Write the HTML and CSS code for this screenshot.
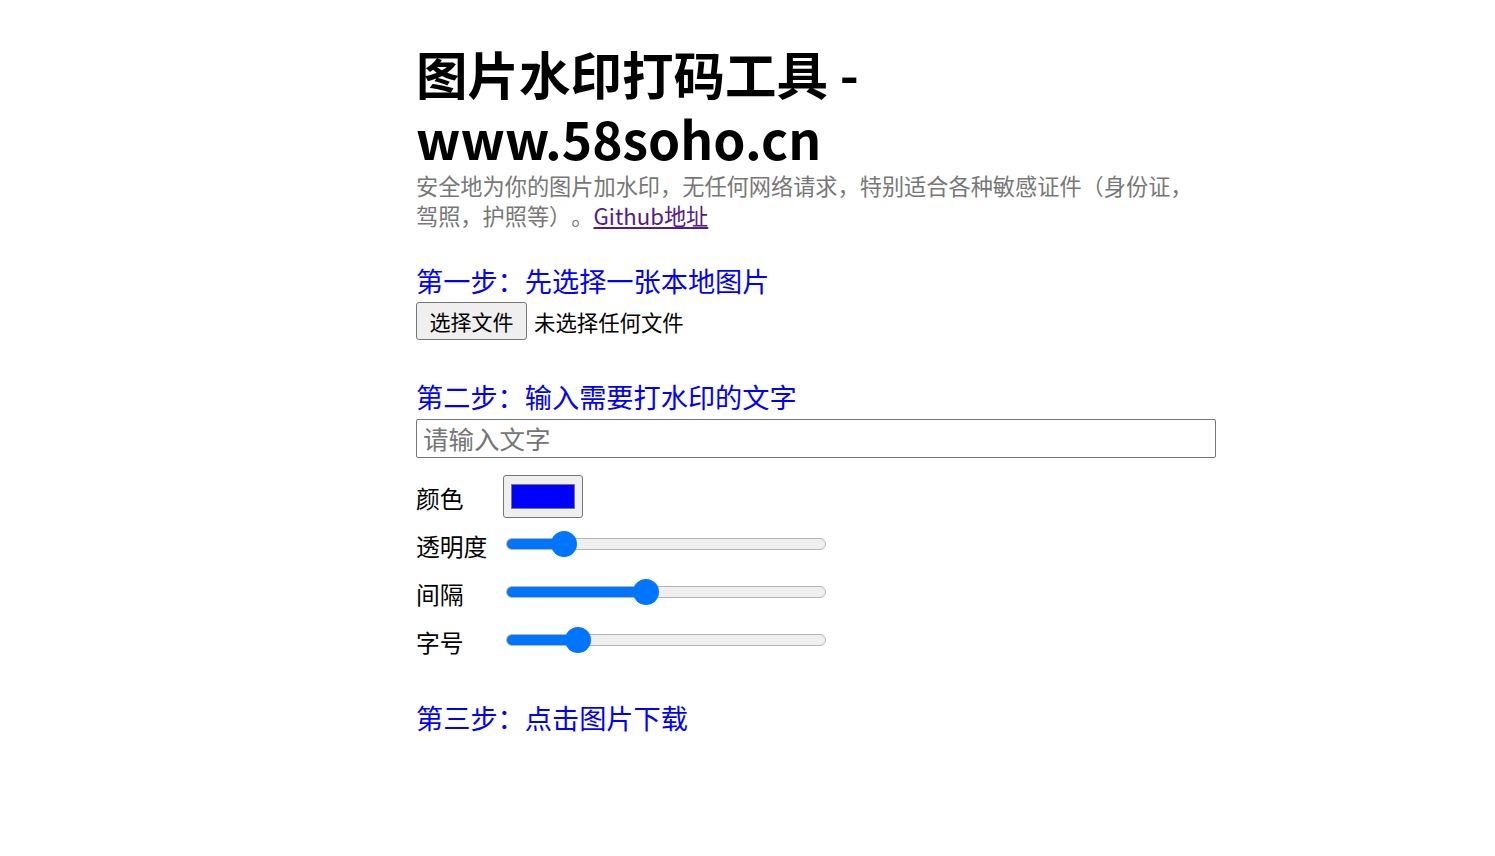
FILE: index.html
```html
<!DOCTYPE html>
<html lang="zh-CN">
<head>
<meta charset="utf-8">
<title>图片水印打码工具</title>
<link rel="stylesheet" href="styles.css">
</head>
<body>
<main class="page">
  <h1 class="title">图片水印打码工具 - www.58soho.cn</h1>
  <p class="intro">安全地为你的图片加水印，无任何网络请求，特别适合各种敏感证件（身份证，驾照，护照等）。<a class="link" href="#">Github地址</a></p>

  <h2 class="step step-first">第一步：先选择一张本地图片</h2>
  <div class="file-row">
    <label class="file-btn">选择文件<input class="file-input" type="file" accept="image/*"></label>
    <span class="file-name">未选择任何文件</span>
  </div>

  <h2 class="step step-second">第二步：输入需要打水印的文字</h2>
  <input class="text-input" type="text" placeholder="请输入文字">

  <div class="controls">
    <div class="row">
      <span class="label">颜色</span>
      <input class="color" type="color" value="#0000ff">
    </div>
    <div class="row">
      <span class="label">透明度</span>
      <input class="range" type="range" min="0" max="100" value="15" style="--p:15%">
    </div>
    <div class="row">
      <span class="label">间隔</span>
      <input class="range" type="range" min="0" max="100" value="43" style="--p:43%">
    </div>
    <div class="row">
      <span class="label">字号</span>
      <input class="range" type="range" min="0" max="100" value="20" style="--p:20%">
    </div>
  </div>

  <h2 class="step step-third">第三步：点击图片下载</h2>
</main>
</body>
</html>
```

FILE: styles.css
```css
html, body {
  margin: 0;
  padding: 0;
  background: #ffffff;
}

body {
  font-family: "Noto Sans CJK SC", "Noto Sans", sans-serif;
  color: #000000;
  font-size: 21px;
  text-spacing-trim: space-all;
}

.page {
  width: 800px;
  margin: 0 0 0 416px;
}

.title {
  margin: 40px 0 0;
  font-size: 51.5px;
  line-height: 65px;
  font-weight: 700;
}

.intro {
  max-width: 790px;
  margin: 1px 0 0;
  font-size: 22.2px;
  line-height: 29.5px;
  color: #777777;
}

.link {
  color: #551a8b;
  text-decoration: underline;
}

.step {
  margin: 0;
  font-size: 27.2px;
  line-height: 36px;
  font-weight: 400;
  color: #0000ff;
}

.step-first { margin-top: 32px; }
.step-second { margin-top: 38px; }
.step-third { margin-top: 35px; }

.file-row {
  margin-top: 4px;
  display: flex;
  align-items: center;
  gap: 7px;
  height: 38px;
}

.file-btn {
  display: flex;
  align-items: center;
  justify-content: center;
  box-sizing: border-box;
  width: 111px;
  height: 38px;
  background: #efefef;
  border: 1px solid #767676;
  border-radius: 3px;
  font-size: 21px;
  color: #000;
}

.file-input {
  display: none;
}

.file-name {
  font-size: 21.4px;
}

.text-input {
  display: block;
  box-sizing: border-box;
  margin-top: 5px;
  width: 800px;
  height: 39px;
  padding: 0 0 3px 6px;
  border: 1px solid #767676;
  border-radius: 2px;
  font-family: inherit;
  font-size: 25.5px;
  color: #000;
  outline: none;
}

.text-input::placeholder {
  color: #757575;
}

.controls {
  margin-top: 14px;
  display: flex;
  flex-direction: column;
}

.row {
  display: flex;
  align-items: center;
  height: 48px;
}

.label {
  width: 87px;
  flex: none;
  font-size: 23.8px;
  padding-top: 2px;
}

.color {
  -webkit-appearance: none;
  appearance: none;
  box-sizing: border-box;
  width: 80px;
  height: 43px;
  margin: 0;
  padding: 0;
  background: #efefef;
  border: 1px solid #767676;
  border-radius: 3px;
}

.color::-webkit-color-swatch-wrapper {
  padding: 8px 7px;
}

.color::-webkit-color-swatch {
  border: 1px solid #777777;
  border-radius: 0;
}

.range {
  -webkit-appearance: none;
  appearance: none;
  width: 320px;
  height: 26px;
  margin: 0 0 0 3px;
  background: transparent;
}

.range::-webkit-slider-runnable-track {
  box-sizing: border-box;
  height: 12px;
  border-radius: 6px;
  border: 1px solid #b5b5b5;
  background: linear-gradient(to right, #0075ff 0, #0075ff calc(13px + (100% - 26px) * var(--p) / 100%), #efefef calc(13px + (100% - 26px) * var(--p) / 100%), #efefef 100%);
}

.range::-webkit-slider-thumb {
  -webkit-appearance: none;
  appearance: none;
  width: 26px;
  height: 26px;
  margin-top: -8px;
  border-radius: 50%;
  background: #0075ff;
  border: none;
}
```
